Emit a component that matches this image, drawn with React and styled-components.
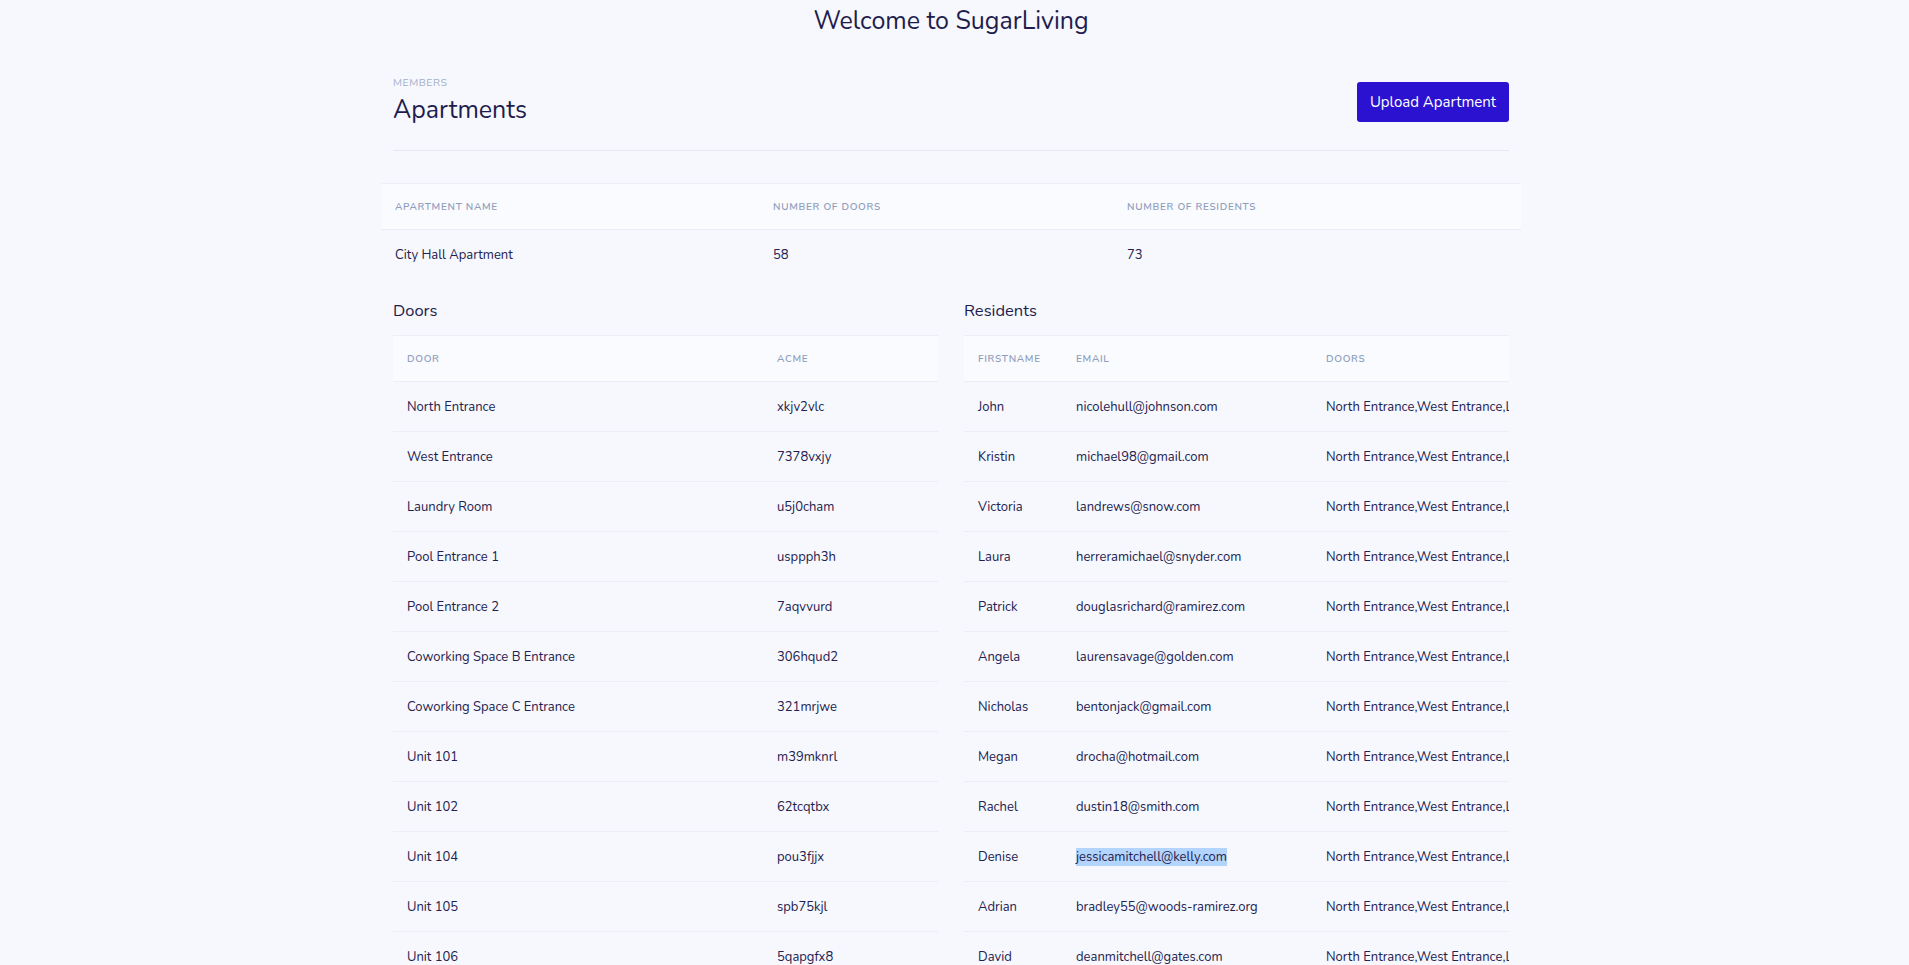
import styled, { createGlobalStyle } from "styled-components";

const doors = [
    ["North Entrance", "xkjv2vlc"],
    ["West Entrance", "7378vxjy"],
    ["Laundry Room", "u5j0cham"],
    ["Pool Entrance 1", "usppph3h"],
    ["Pool Entrance 2", "7aqvvurd"],
    ["Coworking Space B Entrance", "306hqud2"],
    ["Coworking Space C Entrance", "321mrjwe"],
    ["Unit 101", "m39mknrl"],
    ["Unit 102", "62tcqtbx"],
    ["Unit 104", "pou3fjjx"],
    ["Unit 105", "spb75kjl"],
    ["Unit 106", "5qapgfx8"],
    ["Unit 107", "k2dw9rna"],
    ["Unit 108", "t8vq3mzo"],
];

const residents = [
    ["John", "nicolehull@johnson.com"],
    ["Kristin", "michael98@gmail.com"],
    ["Victoria", "landrews@snow.com"],
    ["Laura", "herreramichael@snyder.com"],
    ["Patrick", "douglasrichard@ramirez.com"],
    ["Angela", "laurensavage@golden.com"],
    ["Nicholas", "bentonjack@gmail.com"],
    ["Megan", "drocha@hotmail.com"],
    ["Rachel", "dustin18@smith.com"],
    ["Denise", "jessicamitchell@kelly.com", true],
    ["Adrian", "bradley55@woods-ramirez.org"],
    ["David", "deanmitchell@gates.com"],
    ["Sarah", "mwilliams@yahoo.com"],
    ["Brian", "kellyjones@hotmail.com"],
];

const residentDoors = "North Entrance,West Entrance,Laundry Room,Pool Entrance 1,Pool Entrance 2";

export default function App(){
    return(
        <>
        <GlobalStyle/>
        <TITLE>Welcome to SugarLiving</TITLE>
        <CONTAINER>
            <HEADER>
                <div>
                    <EYEBROW>Members</EYEBROW>
                    <PAGETITLE>Apartments</PAGETITLE>
                </div>
                <BUTTON>Upload Apartment</BUTTON>
            </HEADER>
            <SUMMARY>
                <colgroup>
                    <col style={{width: "378px"}}/>
                    <col style={{width: "354px"}}/>
                    <col/>
                </colgroup>
                <thead>
                    <tr>
                        <TH>Apartment name</TH>
                        <TH>Number of doors</TH>
                        <TH>Number of residents</TH>
                    </tr>
                </thead>
                <tbody>
                    <tr>
                        <TD>City Hall Apartment</TD>
                        <TD>58</TD>
                        <TD>73</TD>
                    </tr>
                </tbody>
            </SUMMARY>
            <COLUMNS>
                <section>
                    <SECTIONTITLE>Doors</SECTIONTITLE>
                    <SCROLLER>
                        <TABLE>
                            <colgroup>
                                <col style={{width: "370px"}}/>
                                <col/>
                            </colgroup>
                            <thead>
                                <tr><TH>Door</TH><TH>Acme</TH></tr>
                            </thead>
                            <tbody>
                                {doors.map((d, i) => <ROW key={i}><TD>{d[0]}</TD><TD>{d[1]}</TD></ROW>)}
                            </tbody>
                        </TABLE>
                    </SCROLLER>
                </section>
                <section>
                    <SECTIONTITLE>Residents</SECTIONTITLE>
                    <SCROLLER>
                        <TABLE $wide>
                            <colgroup>
                                <col style={{width: "98px"}}/>
                                <col style={{width: "250px"}}/>
                                <col style={{width: "480px"}}/>
                            </colgroup>
                            <thead>
                                <tr><TH>Firstname</TH><TH>Email</TH><TH>Doors</TH></tr>
                            </thead>
                            <tbody>
                                {residents.map((r, i) => (
                                    <ROW key={i}>
                                        <TD>{r[0]}</TD>
                                        <TD>{r[2] ? <SELECTED>{r[1]}</SELECTED> : r[1]}</TD>
                                        <TD>{residentDoors}</TD>
                                    </ROW>
                                ))}
                            </tbody>
                        </TABLE>
                    </SCROLLER>
                </section>
            </COLUMNS>
        </CONTAINER>
        </>
    );
}

const GlobalStyle = createGlobalStyle`
    body{
        margin: 0;
        padding-right: 7px;
        background-color: #F6F8FD;
        color: #23214F;
        font-family: "Nunito", "Lato", "Noto Sans", sans-serif;
    }
`;
const TITLE = styled.h1`
    margin: 7px 0 0 0;
    text-align: center;
    font-size: 25px;
    line-height: 29px;
    font-weight: 400;
    color: #1F1D4D;
`;
const CONTAINER = styled.div`
    width: 1140px;
    margin: 0 auto;
    padding: 0 12px;
    box-sizing: border-box;
`;
const HEADER = styled.div`
    display: flex;
    justify-content: space-between;
    align-items: center;
    margin-top: 40px;
    padding-bottom: 25px;
    border-bottom: 1px solid #E3E8F1;
`;
const EYEBROW = styled.div`
    font-size: 10.5px;
    line-height: 14px;
    text-transform: uppercase;
    letter-spacing: 0.05em;
    color: #A3AFC8;
`;
const PAGETITLE = styled.h2`
    margin: 6px 0 0 0;
    font-size: 25px;
    line-height: 29px;
    font-weight: 400;
    color: #1F1D4D;
`;
const BUTTON = styled.button`
    width: 152px;
    height: 40px;
    border: none;
    border-radius: 3px;
    background-color: #2B12D1;
    color: #FFFFFF;
    font-family: inherit;
    font-size: 15px;
    margin-top: 2px;
`;
const SUMMARY = styled.table`
    width: calc(100% + 24px);
    margin: 32px -12px 0 -12px;
    border-collapse: collapse;
    table-layout: fixed;
    border-top: 1px solid #EBEEF5;
`;
const TH = styled.th`
    height: 45px;
    padding: 0 14px;
    text-align: left;
    font-size: 10px;
    font-weight: 600;
    letter-spacing: 0.07em;
    text-transform: uppercase;
    color: #8E9DBD;
    background-color: #FAFBFE;
    border-bottom: 1px solid #EBEEF5;
    white-space: nowrap;
`;
const TD = styled.td`
    height: 49px;
    padding: 0 14px;
    font-size: 13px;
    color: #23214F;
    white-space: nowrap;
`;
const ROW = styled.tr`
    border-bottom: 1px solid #EBEEF5;
`;
const COLUMNS = styled.div`
    display: grid;
    grid-template-columns: minmax(0, 1fr) minmax(0, 1fr);
    column-gap: 26px;
    margin-top: 21px;
`;
const SECTIONTITLE = styled.h3`
    margin: 0 0 13px 0;
    font-size: 16.5px;
    line-height: 22px;
    font-weight: 400;
    color: #1F1D4D;
`;
const SCROLLER = styled.div`
    overflow: hidden;
    border-top: 1px solid #EBEEF5;
`;
const TABLE = styled.table`
    width: ${props => props.$wide ? "828px" : "100%"};
    border-collapse: collapse;
    table-layout: fixed;
`;
const SELECTED = styled.span`
    background-color: #B3D4FC;
`;
